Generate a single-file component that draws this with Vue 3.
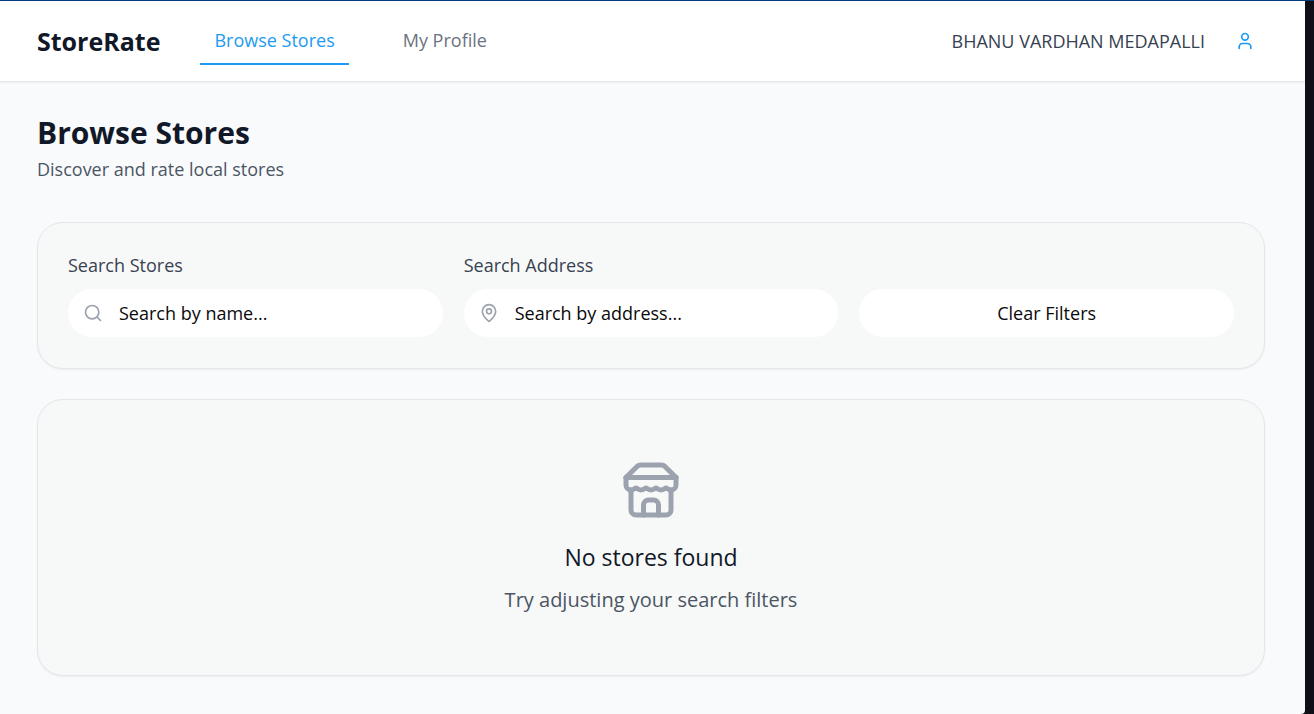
<script setup>
import { ref } from 'vue'

const name = ref('')
const address = ref('')

function clearFilters() {
  name.value = ''
  address.value = ''
}
</script>

<template>
  <div class="window">
    <div class="page">
      <header class="topbar">
        <div class="brand">StoreRate</div>
        <nav class="nav">
          <a href="#stores" class="tab active" aria-current="page">Browse Stores</a>
          <a href="#profile" class="tab">My Profile</a>
        </nav>
        <div class="account">
          <span class="username">BHANU VARDHAN MEDAPALLI</span>
          <button class="user-button" type="button" aria-label="Account">
            <svg class="icon" viewBox="0 0 24 24">
              <path d="M19 21v-2a4 4 0 0 0-4-4H9a4 4 0 0 0-4 4v2" />
              <circle cx="12" cy="7" r="4" />
            </svg>
          </button>
        </div>
      </header>

      <main class="content">
        <h1 class="title">Browse Stores</h1>
        <p class="subtitle">Discover and rate local stores</p>

        <form class="card filters" @submit.prevent>
          <div class="field">
            <label for="store-name">Search Stores</label>
            <div class="control">
              <svg class="icon" viewBox="0 0 24 24" aria-hidden="true">
                <circle cx="11" cy="11" r="8" />
                <path d="m21 21-4.3-4.3" />
              </svg>
              <input id="store-name" v-model="name" type="text" placeholder="Search by name..." />
            </div>
          </div>
          <div class="field">
            <label for="store-address">Search Address</label>
            <div class="control">
              <svg class="icon" viewBox="0 0 24 24" aria-hidden="true">
                <path d="M20 10c0 4.993-5.539 10.193-7.399 11.799a1 1 0 0 1-1.202 0C9.539 20.193 4 14.993 4 10a8 8 0 0 1 16 0" />
                <circle cx="12" cy="10" r="3" />
              </svg>
              <input id="store-address" v-model="address" type="text" placeholder="Search by address..." />
            </div>
          </div>
          <button class="clear" type="button" @click="clearFilters">Clear Filters</button>
        </form>

        <section class="card empty">
          <svg class="icon store" viewBox="0 0 24 24" aria-hidden="true">
            <path d="m2 7 4.41-4.41A2 2 0 0 1 7.83 2h8.34a2 2 0 0 1 1.42.59L22 7" />
            <path d="M4 12v8a2 2 0 0 0 2 2h12a2 2 0 0 0 2-2v-8" />
            <path d="M15 22v-4a2 2 0 0 0-2-2h-2a2 2 0 0 0-2 2v4" />
            <path d="M2 7h20" />
            <path d="M22 7v3a2 2 0 0 1-2 2a2.7 2.7 0 0 1-1.59-.63.7.7 0 0 0-.82 0A2.7 2.7 0 0 1 16 12a2.7 2.7 0 0 1-1.59-.63.7.7 0 0 0-.82 0A2.7 2.7 0 0 1 12 12a2.7 2.7 0 0 1-1.59-.63.7.7 0 0 0-.82 0A2.7 2.7 0 0 1 8 12a2.7 2.7 0 0 1-1.59-.63.7.7 0 0 0-.82 0A2.7 2.7 0 0 1 4 12a2 2 0 0 1-2-2V7" />
          </svg>
          <h2 class="empty-title">No stores found</h2>
          <p class="empty-text">Try adjusting your search filters</p>
        </section>
      </main>
    </div>
  </div>
</template>

<style>
body {
  background: #0e0f17;
}
</style>

<style scoped>
.window {
  box-sizing: border-box;
  display: flex;
  min-height: 100vh;
  padding-right: 9px;
  border-top: 1px solid #003c7d;
  font-family: "Open Sans", "Noto Sans", sans-serif;
  font-size: 18px;
  line-height: 24px;
  color: #111827;
}

.page {
  flex: 1;
  background: #f9fafc;
  border-bottom-right-radius: 4px;
}

.topbar {
  display: flex;
  align-items: center;
  gap: 40px;
  height: 80px;
  padding: 0 40px 0 37px;
  background: #fff;
  border-bottom: 1px solid #e5e7eb;
  box-shadow: 0 1px 2px rgba(0, 0, 0, 0.05);
}

.brand {
  font-size: 25px;
  line-height: 36px;
  font-weight: 700;
}

.nav {
  display: flex;
  gap: 40px;
}

.tab {
  padding: 11px 14px;
  border-bottom: 2px solid transparent;
  font-weight: 500;
  color: #6b7280;
  text-decoration: none;
}

.tab.active {
  color: #1d9bf0;
  border-color: #1d9bf0;
}

.account {
  display: flex;
  align-items: center;
  gap: 20px;
  margin-left: auto;
}

.username {
  color: #374151;
}

.icon {
  display: block;
  flex: none;
  width: 20px;
  height: 20px;
  fill: none;
  stroke: currentColor;
  stroke-width: 2;
  stroke-linecap: round;
  stroke-linejoin: round;
}

.user-button {
  padding: 10px;
  border: 0;
  background: none;
  color: #1d9bf0;
}

.content {
  padding: 31px 40px 37px 37px;
}

.title {
  margin: 0;
  font-size: 30px;
  line-height: 40px;
  font-weight: 700;
}

.subtitle {
  margin: 4px 0 41px;
  color: #4b5563;
}

.card {
  background: #f7f9f8;
  border: 1px solid #e1e8ed;
  border-radius: 26px;
  box-shadow: 0 1px 2px rgba(0, 0, 0, 0.05);
}

.filters {
  display: grid;
  grid-template-columns: repeat(3, 1fr);
  align-items: end;
  gap: 21px;
  padding: 30px 30px 31px;
}

.field label {
  display: block;
  margin-bottom: 12px;
  font-weight: 500;
  color: #374151;
}

.control {
  display: flex;
  align-items: center;
  gap: 16px;
  height: 48px;
  padding: 0 15px;
  border-radius: 24px;
  background: #fff;
  color: #9ca3af;
}

.control input {
  flex: 1;
  min-width: 0;
  padding: 0;
  border: 0;
  outline: 0;
  background: none;
  font: inherit;
  color: #0a0a0a;
}

.control input::placeholder {
  color: #0a0a0a;
  opacity: 1;
}

.clear {
  height: 48px;
  border: 0;
  border-radius: 24px;
  background: #fff;
  font: inherit;
  font-weight: 500;
  color: #0a0a0a;
}

.empty {
  display: flex;
  flex-direction: column;
  align-items: center;
  margin-top: 30px;
  padding: 60px 30px;
}

.store {
  width: 60px;
  height: 60px;
  color: #9ca3af;
}

.empty-title {
  margin: 20px 0 10px;
  font-size: 23px;
  line-height: 35px;
  font-weight: 500;
}

.empty-text {
  margin: 0;
  font-size: 20px;
  line-height: 30px;
  color: #4b5563;
}
</style>
